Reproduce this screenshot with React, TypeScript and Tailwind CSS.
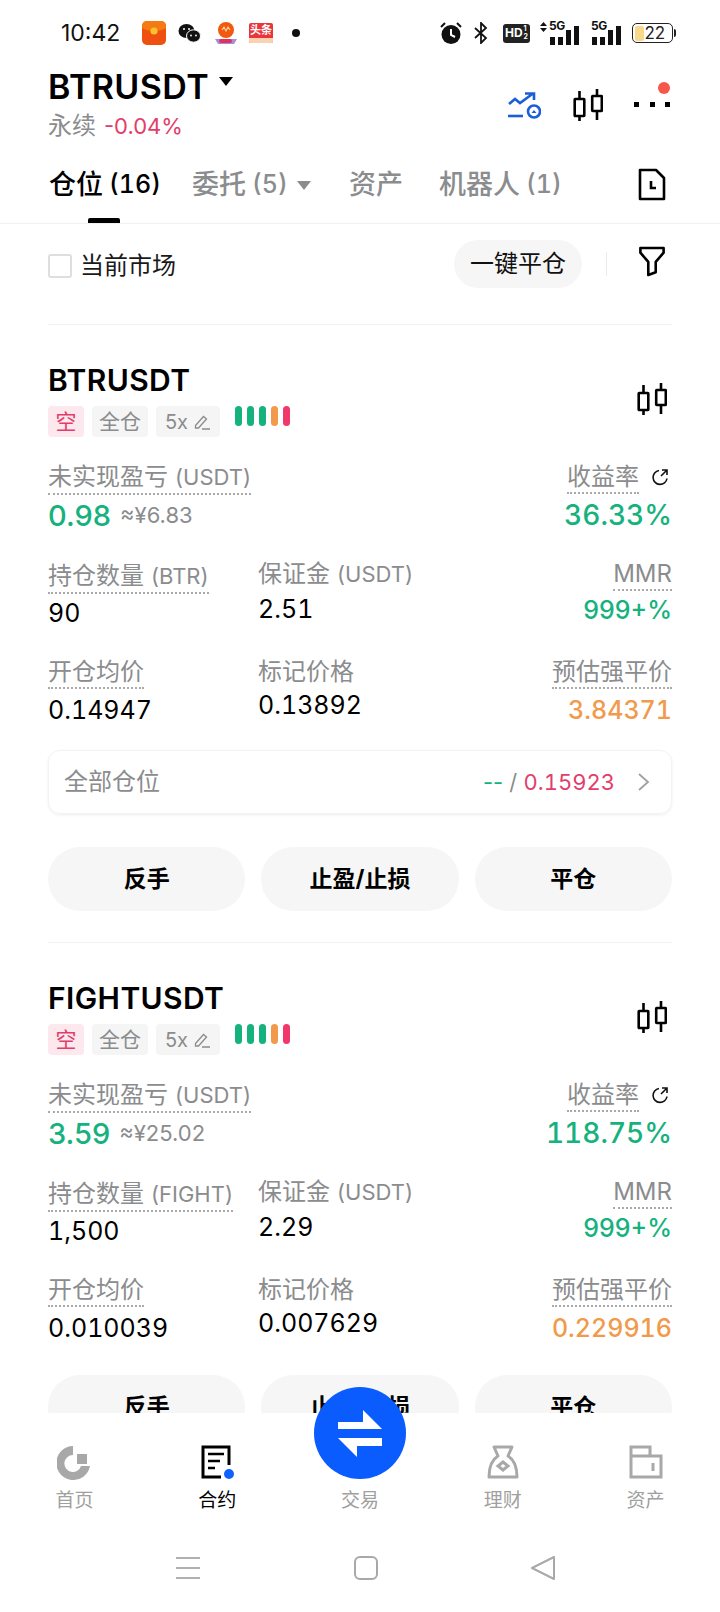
import React from "react";

const FONT = 'Inter, "Noto Sans CJK SC", sans-serif';
const GREEN = "text-[#16b27e]";
const RED = "text-[#e23e6b]";
const ORANGE = "text-[#f19a4c]";
const GRAY = "text-[#8b8c8e]";

function Candles() {
  return (
    <svg width="30" height="32" viewBox="0 0 30 32" fill="none" stroke="#000" strokeWidth="2.6">
      <path d="M6.5 2v8M6.5 27v5M24 0v7M24 22v9" />
      <rect x="1.7" y="10" width="9.6" height="17" rx="0.5" />
      <rect x="19.2" y="7" width="9.6" height="15" rx="0.5" />
    </svg>
  );
}

function Signal({ wide }: { wide?: boolean }) {
  return (
    <div className={`relative h-[24px] flex items-end justify-end gap-[3px] ${wide ? "w-[39px]" : "w-[30px]"}`}>
      <span className={`absolute top-[-1px] text-[#111] text-[12px] font-bold leading-none tracking-[-0.5px] ${wide ? "left-[9px]" : "left-0"}`}>5G</span>
      {wide && (
        <svg className="absolute left-0 top-[1px]" width="7" height="10" viewBox="0 0 7 10" fill="#111">
          <path d="M3.5 0L7 4H0zM0 6h7l-3.5 4z" />
        </svg>
      )}
      <i className="block w-[5px] h-[8px] bg-[#111]" />
      <i className="block w-[5px] h-[8px] bg-[#111]" />
      <i className="block w-[5px] h-[15px] bg-[#111]" />
      <i className="block w-[5px] h-[19px] bg-[#111]" />
    </div>
  );
}

function StatusBar() {
  return (
    <div className="h-[64px] flex items-center pl-[61px] pr-[44px] pt-[2px] shrink-0">
      <span className="text-[23px] text-[#111] w-[81px]">10:42</span>
      <div className="flex items-center">
        <svg width="24" height="24" viewBox="0 0 24 24">
          <rect width="24" height="24" rx="5" fill="#f0500f" />
          <path d="M0 7c6 4 18 4 24 0V5a5 5 0 0 0-5-5H5a5 5 0 0 0-5 5z" fill="#f57a12" />
          <circle cx="12" cy="10" r="3.6" fill="#f8c22e" />
        </svg>
        <svg className="ml-[12px]" width="23" height="21" viewBox="0 0 23 21" fill="#111">
          <ellipse cx="8.5" cy="8" rx="8" ry="7" />
          <ellipse cx="15.5" cy="13" rx="7" ry="6.2" stroke="#fff" strokeWidth="1" />
          <circle cx="6" cy="6" r="1" fill="#fff" />
          <circle cx="11" cy="6" r="1" fill="#fff" />
          <circle cx="13" cy="12.5" r="0.9" fill="#fff" />
          <circle cx="18" cy="12.5" r="0.9" fill="#fff" />
        </svg>
        <svg className="ml-[13px]" width="24" height="24" viewBox="0 0 24 24">
          <circle cx="12" cy="9" r="8" fill="#f0590f" />
          <path d="M8 9l2-3 2 4 2-4 2 3" stroke="#fbd7a0" strokeWidth="1.1" fill="none" />
          <path d="M1 18h22l-3 5H4z" fill="#a58fd8" />
          <rect x="5" y="18" width="13" height="4" rx="2" fill="#e0325c" />
        </svg>
        <div className="ml-[11px] w-[24px] h-[20px] bg-[#e9363c] rounded-[2px] relative flex items-start justify-center overflow-hidden">
          <span className="text-white text-[11px] leading-[15px] font-bold">头条</span>
          <div className="absolute bottom-0 left-0 right-0 h-[5px] bg-[#fbd2b0]" />
        </div>
        <div className="ml-[19px] w-[8px] h-[8px] rounded-full bg-[#111]" />
      </div>
      <div className="ml-auto flex items-center">
        <svg width="22" height="24" viewBox="0 0 22 24" fill="#111">
          <circle cx="11" cy="13.5" r="9.5" />
          <path d="M11 8v6l4 2" stroke="#fff" strokeWidth="2" fill="none" />
          <path d="M1 6l4-4M21 6l-4-4" stroke="#111" strokeWidth="2" />
        </svg>
        <svg className="ml-[12px]" width="14" height="22" viewBox="0 0 14 22" fill="none" stroke="#111" strokeWidth="1.8">
          <path d="M1 6l11 10-5 5V1l5 5L1 16" />
        </svg>
        <div className="ml-[15px] w-[27px] h-[19px] bg-[#222] rounded-[3px] flex items-center justify-center text-white text-[12px] font-bold leading-none">
          HD
          <span className="flex flex-col text-[7px] leading-[8px] ml-[1px]">
            <span>1</span>
            <span>2</span>
          </span>
        </div>
        <div className="ml-[10px]"><Signal wide /></div>
        <div className="ml-[12px]"><Signal /></div>
        <div className="ml-[11px] w-[41px] h-[20px] border-[1.5px] border-[#222] rounded-[5px] flex items-center overflow-hidden p-[1.5px]">
          <div className="w-[9px] h-full bg-[#f8d98c] rounded-[2px]" />
          <span className="ml-[1px] text-[17px] leading-none text-[#222]">22</span>
        </div>
        <div className="w-[2px] h-[8px] bg-[#222] ml-[1px] rounded-r" />
      </div>
    </div>
  );
}

function Header() {
  return (
    <div className="h-[76px] shrink-0 flex items-start pl-[48px] pr-[50px]">
      <div className="flex flex-col pt-[1px]">
        <div className="flex items-start">
          <span className="text-[34px] leading-[44px] font-semibold text-black tracking-[0.4px]">BTRUSDT</span>
          <span className="ml-[10px] mt-[12px] w-0 h-0 border-l-[7px] border-r-[7px] border-t-[9px] border-l-transparent border-r-transparent border-t-black" />
        </div>
        <div className="flex items-center h-[32px] mt-[1px]">
          <span className={`text-[24px] leading-[32px] ${GRAY}`}>永续</span>
          <span className={`ml-[8px] text-[22px] leading-[32px] ${RED}`}>-0.04%</span>
        </div>
      </div>
      <div className="ml-auto flex items-start mt-[25px] relative">
        <svg className="mt-[3px]" width="33" height="27" viewBox="0 0 33 27" fill="none" stroke="#1a5fd6" strokeWidth="2.6">
          <path d="M1 12l6-5 5 4L25 1.5M17 1.5h9V8" />
          <path d="M0 24h15" />
          <circle cx="26" cy="19.5" r="6" />
          <path d="M23.5 21h5L26 18z" fill="#1a5fd6" stroke="none" />
        </svg>
        <div className="ml-[32px]"><Candles /></div>
        <div className="ml-[31px] mt-[13px] flex justify-between w-[36px]">
          <i className="block w-[5px] h-[5px] bg-black" />
          <i className="block w-[5px] h-[5px] bg-black" />
          <i className="block w-[5px] h-[5px] bg-black" />
        </div>
        <span className="absolute right-[0px] top-[-7px] w-[12px] h-[12px] rounded-full bg-[#f7564a]" />
      </div>
    </div>
  );
}

function Tabs() {
  return (
    <div className="h-[84px] shrink-0 border-b border-[#f1f1f1] flex items-start pt-[10px] pl-[49px] pr-[54px] relative">
      <div className="flex items-center h-[68px] w-[143px] text-[27px] leading-none text-black font-medium whitespace-nowrap">
        仓位<span className="ml-[6px] text-[25px] tabular-nums">(16)</span>
      </div>
      <div className={`flex items-center h-[68px] w-[157px] text-[27px] leading-none ${GRAY} font-medium whitespace-nowrap`}>
        委托<span className="ml-[6px] text-[25px] tabular-nums">(5)</span>
        <span className="ml-[9px] mt-[2px] w-0 h-0 border-l-[7px] border-r-[7px] border-t-[9px] border-l-transparent border-r-transparent border-t-[#8b8c8e]" />
      </div>
      <div className={`flex items-center h-[68px] w-[90px] text-[27px] leading-none ${GRAY} font-medium`}>资产</div>
      <div className={`flex items-center h-[68px] text-[27px] leading-none ${GRAY} font-medium whitespace-nowrap`}>
        机器人<span className="ml-[6px] text-[25px] tabular-nums">(1)</span>
      </div>
      <svg className="ml-auto mt-[18px]" width="28" height="33" viewBox="0 0 28 33" fill="none" stroke="#000" strokeWidth="2.6">
        <path d="M2 2h16l8 8v21H2z" strokeLinejoin="round" />
        <path d="M13 13v7h5" />
      </svg>
      <span className="absolute left-[88px] bottom-0 w-[32px] h-[5px] rounded-t-[2px] bg-black" />
    </div>
  );
}

function Toolbar() {
  return (
    <div className="h-[101px] mx-[48px] border-b border-[#f1f1f1] flex items-start pt-[16px]">
      <div className="mt-[14px] w-[24px] h-[24px] border-2 border-[#dedede] rounded-[3px]" />
      <span className="ml-[8px] mt-[11px] text-[24px] leading-[30px] text-[#1a1a1a]">当前市场</span>
      <button className="ml-auto w-[128px] h-[48px] rounded-full bg-[#f6f6f6] text-[24px] text-[#111]">一键平仓</button>
      <span className="ml-[24px] mt-[12px] w-[1px] h-[24px] bg-[#ececec]" />
      <svg className="ml-[32px] mr-[7px] mt-[6px]" width="26" height="31" viewBox="0 0 28 33" fill="none" stroke="#000" strokeWidth="2.8" strokeLinejoin="round">
        <path d="M1.5 2h25v5L18 17v11l-8 3V17L1.5 7z" />
      </svg>
    </div>
  );
}

function Label({ cn, en, dotted = true, className = "" }: { cn: string; en?: string; dotted?: boolean; className?: string }) {
  return (
    <span className={`inline-block whitespace-nowrap text-[24px] leading-[31px] ${GRAY} ${dotted ? "border-b-2 border-dotted border-[#a9a9a9]" : ""} ${className}`}>
      {cn}
      {en && <span className="ml-[7px] text-[22px]">{en}</span>}
    </span>
  );
}

type Pos = {
  symbol: string;
  pnl: string;
  cny: string;
  roe: string;
  base: string;
  qty: string;
  margin: string;
  entry: string;
  mark: string;
  liq: string;
  summary?: boolean;
};

function Card({ p }: { p: Pos }) {
  return (
    <div className="h-[618px] mx-[48px] border-b border-[#f1f1f1] pt-[36px]">
      <div className="flex items-start h-[82px]">
        <div className="flex flex-col">
          <span className="text-[30px] leading-[38px] font-semibold text-black tracking-[0.4px]">{p.symbol}</span>
          <div className="flex items-start mt-[7px]">
            <span className="w-[36px] h-[31px] rounded-[4px] bg-[#fde8ee] flex items-center justify-center text-[21px] text-[#e23e6b]">空</span>
            <span className={`ml-[8px] w-[56px] h-[31px] rounded-[4px] bg-[#f5f5f5] flex items-center justify-center text-[21px] ${GRAY}`}>全仓</span>
            <span className={`ml-[8px] w-[64px] h-[31px] rounded-[4px] bg-[#f5f5f5] flex items-center justify-center text-[20px] ${GRAY}`}>
              5x
              <svg className="ml-[6px]" width="17" height="16" viewBox="0 0 17 16" fill="none" stroke="#8b8c8e" strokeWidth="1.3">
                <path d="M1.5 11.5L9.5 2.5l3 2.5-8 9H1.5zM8 15h8" />
              </svg>
            </span>
            <div className="ml-[15px] flex gap-[5px]">
              {["#16b27e", "#16b27e", "#16b27e", "#f19a4c", "#f0386b"].map((c, i) => (
                <span key={i} className="block w-[7px] h-[20px] rounded-full" style={{ backgroundColor: c }} />
              ))}
            </div>
          </div>
        </div>
        <div className="ml-auto mt-[22px] mr-[5px]"><Candles /></div>
      </div>

      <div className="mt-[18px] flex justify-between h-[100px]">
        <div className="flex flex-col items-start">
          <Label cn="未实现盈亏" en="(USDT)" />
          <div className="flex items-center h-[41px]">
            <span className={`text-[29px] font-medium ${GREEN}`}>{p.pnl}</span>
            <span className={`ml-[9px] text-[22px] ${GRAY}`}>≈¥{p.cny}</span>
          </div>
        </div>
        <div className="flex flex-col items-end">
          <div className="flex items-center mr-[3px]">
            <Label cn="收益率" />
            <svg className="ml-[12px] mb-[2px]" width="18" height="18" viewBox="0 0 18 18" fill="none" stroke="#111" strokeWidth="1.6">
              <path d="M8 2.5a7 7 0 1 0 8 8M10 8l6-6M11 2h5v5" />
            </svg>
          </div>
          <span className={`text-[28px] leading-[42px] font-medium tabular-nums ${GREEN}`}>{p.roe}</span>
        </div>
      </div>

      <div className="grid grid-cols-[210px_1fr_auto] grid-rows-[76px_auto] gap-y-[19px] h-[172px]">
        <div>
          <Label cn="持仓数量" en={`(${p.base})`} className="mt-[-1px]" />
          <div className="mt-[1px] text-[25px] leading-[36px] text-black tabular-nums">{p.qty}</div>
        </div>
        <div>
          <Label cn="保证金" en="(USDT)" dotted={false} className="mt-[-3px]" />
          <div className="mt-[1px] text-[25px] leading-[36px] text-black tabular-nums">{p.margin}</div>
        </div>
        <div className="flex flex-col items-end">
          <Label cn="MMR" className="mt-[-3px]" />
          <div className={`mt-[1px] text-[25px] leading-[36px] font-medium ${GREEN}`}>999+%</div>
        </div>
        <div>
          <Label cn="开仓均价" />
          <div className="mt-[3px] text-[25px] leading-[36px] text-black tabular-nums">{p.entry}</div>
        </div>
        <div>
          <Label cn="标记价格" dotted={false} />
          <div className="text-[25px] leading-[36px] text-black tabular-nums">{p.mark}</div>
        </div>
        <div className="flex flex-col items-end">
          <Label cn="预估强平价" />
          <div className={`mt-[3px] text-[25px] leading-[36px] font-medium tabular-nums ${ORANGE}`}>{p.liq}</div>
        </div>
      </div>

      {p.summary && (
        <div className="h-[64px] mt-[17px] rounded-[12px] border border-[#f3f3f3] shadow-[0_1px_3px_rgba(0,0,0,0.07)] flex items-center pl-[15px] pr-[21px]">
          <span className={`text-[24px] ${GRAY}`}>全部仓位</span>
          <span className="ml-auto text-[22px]">
            <span className={GREEN}>--</span>
            <span className={GRAY}> / </span>
            <span className={`${RED} tabular-nums`}>0.15923</span>
          </span>
          <svg className="ml-[22px]" width="13" height="20" viewBox="0 0 13 20" fill="none" stroke="#a0a0a0" strokeWidth="1.8">
            <path d="M2 2l9 8-9 8" />
          </svg>
        </div>
      )}

      <div className={`grid grid-cols-3 gap-[16px] ${p.summary ? "mt-[33px]" : "mt-[24px]"}`}>
        {["反手", "止盈/止损", "平仓"].map((t) => (
          <button key={t} className="h-[64px] rounded-full bg-[#f6f6f6] text-[23px] font-bold text-black">{t}</button>
        ))}
      </div>
    </div>
  );
}

function NavItem({ label, active, icon }: { label: string; active?: boolean; icon?: React.ReactNode }) {
  return (
    <div className="flex flex-col items-center">
      <div className="h-[34px] flex items-center justify-center">{icon}</div>
      <span className={`mt-[8px] text-[19px] leading-[28px] ${active ? "text-black" : "text-[#a0a0a0]"}`}>{label}</span>
    </div>
  );
}

function BottomNav() {
  return (
    <div className="h-[199px] shrink-0 bg-white relative">
      <div className="grid grid-cols-5 px-[3px] pt-[32px]">
        <NavItem
          label="首页"
          icon={
            <svg width="34" height="35" viewBox="0 0 34 35" fill="none">
              <path d="M16 1v9a8.5 8.5 0 1 0 8 11h9A17 17 0 1 1 16 1z" fill="#a8a8a8" />
              <rect x="20" y="9" width="10" height="10" fill="#a8a8a8" />
            </svg>
          }
        />
        <NavItem
          label="合约"
          active
          icon={
            <svg width="34" height="34" viewBox="0 0 34 34" fill="none">
              <path d="M29 20V2H3v30h18" stroke="#000" strokeWidth="3" />
              <path d="M8 9h16M8 16h12M8 23h7" stroke="#000" strokeWidth="2.6" />
              <circle cx="29" cy="29" r="5" fill="#0f62fe" />
            </svg>
          }
        />
        <NavItem label="交易" />
        <NavItem
          label="理财"
          icon={
            <svg width="32" height="34" viewBox="0 0 32 34" fill="none" stroke="#a8a8a8" strokeWidth="3">
              <path d="M7 2h18l-4 9c5 3 9 9 9 21H2c0-12 4-18 9-21z" strokeLinejoin="round" />
              <path d="M16 17l5 4-5 4-5-4z" />
            </svg>
          }
        />
        <NavItem
          label="资产"
          icon={
            <svg width="34" height="34" viewBox="0 0 34 34" fill="none" stroke="#a8a8a8" strokeWidth="3">
              <path d="M2 32V2h19v9M2 11h30v21H2z" />
              <path d="M24 18v8" />
            </svg>
          }
        />
      </div>
      <div className="absolute left-[314px] top-[-26px] w-[92px] h-[92px] rounded-full bg-[#0a5cff] flex items-center justify-center">
        <svg width="44" height="47" viewBox="0 0 44 47" fill="#fff">
          <path d="M0 12H25V0L44 19H0z" />
          <path d="M44 28V36H19V47L0 28z" />
        </svg>
      </div>
      <div className="absolute left-0 right-0 top-[143px] flex justify-center items-center gap-[153px] pl-[10px]">
        <svg width="26" height="24" viewBox="0 0 26 24" fill="none" stroke="#b0b0b0" strokeWidth="2">
          <path d="M1 2h24M1 12h24M1 22h24" />
        </svg>
        <svg width="24" height="24" viewBox="0 0 24 24" fill="none" stroke="#a8a8a8" strokeWidth="2">
          <rect x="1" y="1" width="22" height="22" rx="5" />
        </svg>
        <svg width="24" height="24" viewBox="0 0 24 24" fill="none" stroke="#a8a8a8" strokeWidth="2" strokeLinejoin="round">
          <path d="M23 1v22L1 12z" />
        </svg>
      </div>
    </div>
  );
}

const positions: Pos[] = [
  { symbol: "BTRUSDT", pnl: "0.98", cny: "6.83", roe: "36.33%", base: "BTR", qty: "90", margin: "2.51", entry: "0.14947", mark: "0.13892", liq: "3.84371", summary: true },
  { symbol: "FIGHTUSDT", pnl: "3.59", cny: "25.02", roe: "118.75%", base: "FIGHT", qty: "1,500", margin: "2.29", entry: "0.010039", mark: "0.007629", liq: "0.229916" },
];

export default function App() {
  return (
    <div className="w-[720px] h-[1612px] bg-white overflow-hidden flex flex-col" style={{ fontFamily: FONT }}>
      <StatusBar />
      <Header />
      <Tabs />
      <div className="flex-1 overflow-hidden min-h-0">
        <Toolbar />
        {positions.map((p) => (
          <Card key={p.symbol} p={p} />
        ))}
      </div>
      <BottomNav />
    </div>
  );
}
